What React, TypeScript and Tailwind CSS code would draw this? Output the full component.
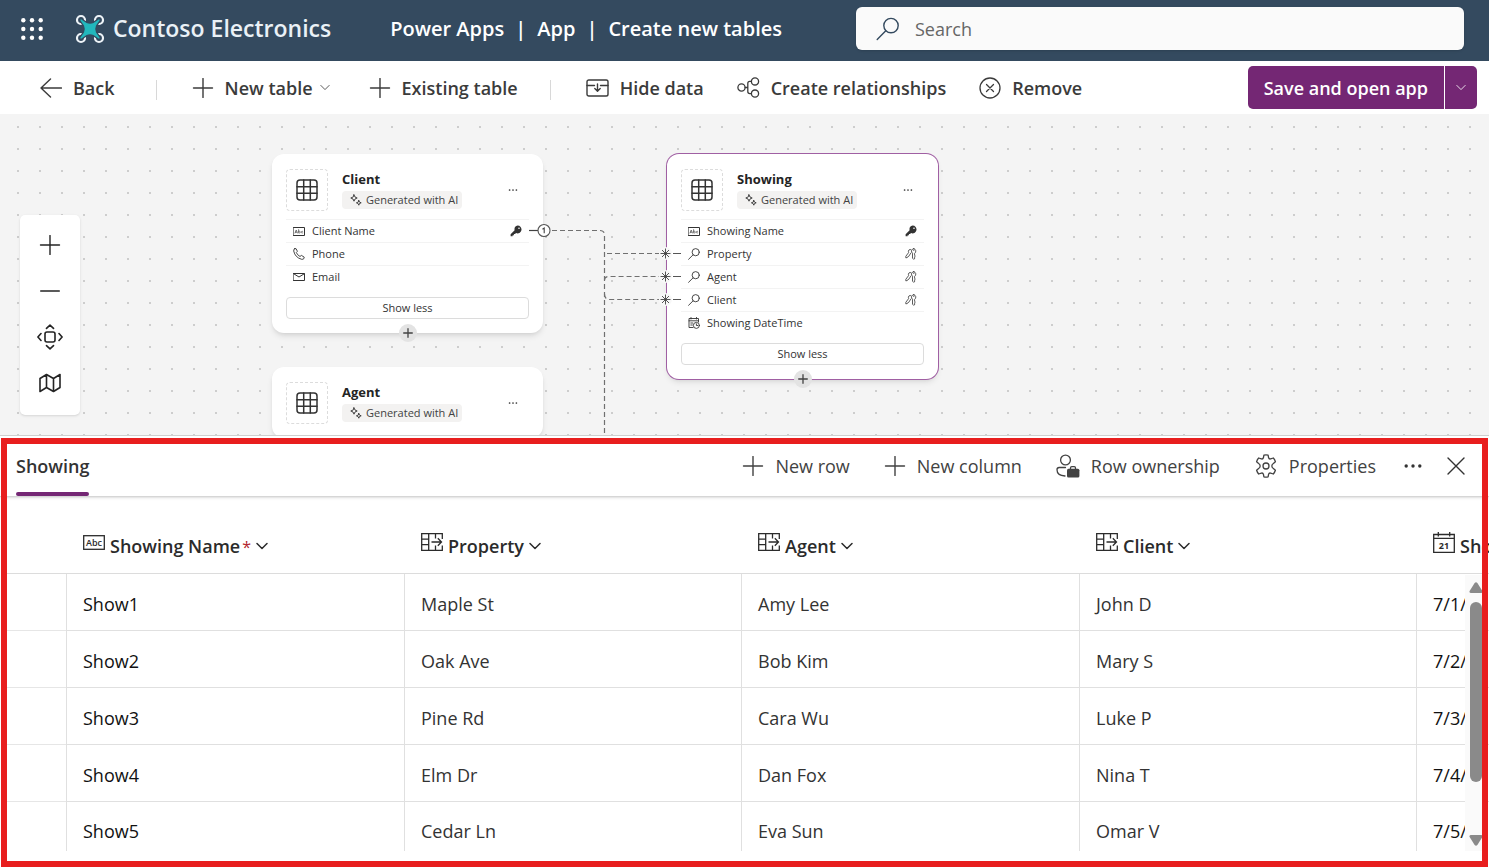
import type { ReactNode } from "react";

type SvgProps = { className?: string };

const stroke = {
  fill: "none",
  stroke: "currentColor",
  strokeLinecap: "round" as const,
  strokeLinejoin: "round" as const,
};

const WaffleIcon = () => (
  <svg width="22" height="22" viewBox="0 0 22 22" fill="#fff" aria-hidden="true">
    {[2.3, 11, 19.7].map((y) => [2.3, 11, 19.7].map((x) => <circle key={`${x}-${y}`} cx={x} cy={y} r="2.2" />))}
  </svg>
);

const DroneLogo = () => (
  <svg width="30" height="30" viewBox="0 0 30 30" aria-hidden="true">
    <g fill="none" stroke="#eef4f8" strokeWidth="2.200">
      {[6, 24].map((y) => [6, 24].map((x) => <circle key={`${x}-${y}`} cx={x} cy={y} r="4" />))}
    </g>
    <path
      d="M6 5.200 11.500 9Q15 10.600 18.500 9L24 5.200 24.800 6 21 11.500Q19.400 15 21 18.500L24.800 24 24 24.800 18.500 21Q15 19.400 11.500 21L6 24.800 5.200 24 9 18.500Q10.600 15 9 11.500L5.200 6Z"
      fill="#22b8bd"
      stroke="#344a5f"
      strokeWidth="2.600"
      paintOrder="stroke"
    />
  </svg>
);

const SearchIcon = ({ className }: SvgProps) => (
  <svg className={className} viewBox="0 0 24 24" {...stroke} strokeWidth="1.4" aria-hidden="true">
    <circle cx="15" cy="8.600" r="7.200" />
    <path d="M9.800 13.800 1.200 22.600" />
  </svg>
);

const LookupSmall = () => (
  <svg width="12" height="12" viewBox="0 0 12 12" {...stroke} strokeWidth=".9" aria-hidden="true">
    <circle cx="7.700" cy="4.200" r="3.600" />
    <path d="M5.100 6.800.6 11.300" />
  </svg>
);

const BackIcon = () => (
  <svg width="22" height="20" viewBox="0 0 22 20" {...stroke} strokeWidth="1.4" aria-hidden="true">
    <path d="M10.500 1 1 10l9.500 9M1 10h20.400" />
  </svg>
);

const PlusIcon = () => (
  <svg width="22" height="20" viewBox="0 0 22 20" {...stroke} strokeWidth="1.400" aria-hidden="true">
    <path d="M11 .5v19M1.500 10h19" />
  </svg>
);

const ChevronDown = ({ className }: SvgProps) => (
  <svg className={className} viewBox="0 0 12 8" {...stroke} aria-hidden="true">
    <path d="M1 1.500 6 6.500l5-5" />
  </svg>
);

const HideDataIcon = () => (
  <svg width="23" height="18" viewBox="0 0 23 18" {...stroke} strokeWidth="1.400" aria-hidden="true">
    <rect x="1" y="1" width="21" height="16" rx="1.800" />
    <path d="M1 6.500h7.500M14.500 6.500H22M11.500 5v7M8.800 9.600l2.700 2.600 2.700-2.600" />
  </svg>
);

const RelationIcon = () => (
  <svg width="23" height="21" viewBox="0 0 23 21" {...stroke} strokeWidth="1.300" aria-hidden="true">
    <circle cx="4.500" cy="10.500" r="3.600" />
    <circle cx="18" cy="4.400" r="3.600" />
    <circle cx="18" cy="16.600" r="3.600" />
    <path d="M8.200 10.500h2.600M14.400 4.400h-1.600q-2 0-2 2v8.200q0 2 2 2h1.600" />
  </svg>
);

const RemoveIcon = () => (
  <svg width="22" height="22" viewBox="0 0 22 22" {...stroke} strokeWidth="1.300" aria-hidden="true">
    <circle cx="11" cy="11" r="10" />
    <path d="m7.500 7.500 7 7M14.500 7.500l-7 7" />
  </svg>
);

const PersonBagIcon = () => (
  <svg width="24" height="24" viewBox="0 0 24 24" aria-hidden="true">
    <g {...stroke} strokeWidth="1.300">
      <circle cx="9.500" cy="6" r="4.900" />
      <path d="M9.500 13.500H3.200q-2.200 0-2.200 2.200Q1 21.500 9 22" />
      <path d="M14.500 15v-1q0-1.300 1.300-1.300h2.400q1.300 0 1.300 1.300v1" />
    </g>
    <rect x="11" y="14.700" width="12.400" height="8.800" rx="1.500" fill="currentColor" />
  </svg>
);

const GearIcon = () => (
  <svg width="24" height="24" viewBox="0 0 24 24" {...stroke} strokeWidth="1.300" aria-hidden="true">
    <circle cx="12" cy="12" r="3" />
    <path d="M9.900 1.200q2.100-.5 4.200 0l.5 2.600q.5 1.500 2 1.100l2.700-.9q1.500 1.600 2.100 3.700l-2 1.800q-1.700 1-1.500 2.500-.2 1.500 1.500 2.500l2 1.800q-.6 2.100-2.100 3.700l-2.700-.9q-1.500-.4-2 1.100l-.5 2.600q-2.100.5-4.200 0l-.5-2.600q-.5-1.500-2-1.100l-2.700.9q-1.500-1.600-2.100-3.700l2-1.800q1.700-1 1.500-2.500.2-1.500-1.500-2.500l-2-1.800q.6-2.100 2.100-3.700l2.700.9q1.500.4 2-1.100z" />
  </svg>
);

const MoreIcon = ({ className }: SvgProps) => (
  <svg className={className} viewBox="0 0 18 4" fill="currentColor" aria-hidden="true">
    <circle cx="2.200" cy="2" r="1.700" />
    <circle cx="9" cy="2" r="1.700" />
    <circle cx="15.800" cy="2" r="1.700" />
  </svg>
);

const CloseIcon = () => (
  <svg width="18" height="18" viewBox="0 0 18 18" {...stroke} strokeWidth="1.400" aria-hidden="true">
    <path d="m1 1 16 16M17 1 1 17" />
  </svg>
);

const FitIcon = () => (
  <svg width="26" height="26" viewBox="0 0 26 26" {...stroke} strokeWidth="1.600" aria-hidden="true">
    <rect x="8" y="8" width="10" height="10" rx="2" />
    <path d="M9.500 4.400 13 1.200l3.500 3.200M9.500 21.600l3.500 3.200 3.500-3.200M4 9.500.9 13 4 16.500M22 9.500l3.100 3.500-3.100 3.500" />
  </svg>
);

const MapIcon = () => (
  <svg width="22" height="20" viewBox="0 0 22 20" {...stroke} strokeWidth="1.600" aria-hidden="true">
    <path d="M1 5.500 7.500 1.500l7 4 6.500-4v13l-6.500 4-7-4-6.500 4zM7.500 1.500v13M14.500 5.500v13" />
  </svg>
);

const GridIcon = () => (
  <svg width="22" height="22" viewBox="0 0 22 22" {...stroke} strokeWidth="1.500" aria-hidden="true">
    <rect x="1" y="1" width="20" height="20" rx="3" />
    <path d="M7.700 1v20M14.300 1v20M1 7.700h20M1 14.300h20" />
  </svg>
);

const SparkleIcon = () => (
  <svg width="12" height="12" viewBox="0 0 12 12" {...stroke} strokeWidth="1" aria-hidden="true">
    <path d="M4 .8 5 3l2.200 1L5 5 4 7.200 3 5 .8 4 3 3zM8.800 6.400l.7 1.700 1.700.7-1.700.7-.7 1.700-.7-1.700-1.700-.7 1.700-.7z" />
  </svg>
);

const AbcSmall = () => (
  <svg width="12" height="9" viewBox="0 0 12 9" aria-hidden="true">
    <rect x=".5" y=".5" width="11" height="8" {...stroke} strokeWidth="1" />
    <path d="M2 6 3.200 3 4.400 6M2.400 5.200h1.600M5.600 2.600V6h.8a.9.900 0 0 0 0-1.800h-.8M9.800 4.500a.9.900 0 1 0 0 1.300" {...stroke} strokeWidth=".6" />
  </svg>
);

const PhoneIcon = () => (
  <svg width="12" height="12" viewBox="0 0 12 12" {...stroke} strokeWidth=".9" aria-hidden="true">
    <path d="M1.500.8 3 .6l1.400 2.700L3.300 4.500q1 2.500 3.700 4l1.400-1.100 2.800 1.700-.3 1.500q-.8.900-2.300.7Q2 9.400.7 3 .7 1.400 1.500.8z" />
  </svg>
);

const MailIcon = () => (
  <svg width="12" height="8" viewBox="0 0 12 8" {...stroke} strokeWidth="1" aria-hidden="true">
    <path d="M.5.5h11v7H.5zM.8.8 6 4 11.200.8" />
  </svg>
);

const DateTimeIcon = () => (
  <svg width="12" height="12" viewBox="0 0 12 12" {...stroke} strokeWidth=".9" aria-hidden="true">
    <path d="M5 10.500H1v-9h9.500V5M1 3.800h9.500M3 .5v1.500M8.500.5v1.500M2.800 6h2M2.800 8h1.500" />
    <circle cx="8.400" cy="8.400" r="3" />
    <path d="M8.400 6.800v1.700h1.300" />
  </svg>
);

const KeyIcon = () => (
  <svg width="12" height="12" viewBox="0 0 12 12" fill="currentColor" aria-hidden="true">
    <path
      fillRule="evenodd"
      d="M7.600.6a3.900 3.900 0 1 1-1.500 7.500L5 9.100H3.900v1.200H2.600v1H.6V9.200l4-4A3.900 3.900 0 0 1 7.600.6zM9 2.400a.8.800 0 1 0 0 1.600.8.800 0 0 0 0-1.600z"
    />
  </svg>
);

const KeysIcon = () => (
  <svg width="12" height="12" viewBox="0 0 12 12" {...stroke} strokeWidth=".8" aria-hidden="true">
    <path d="M6.200 1.800Q5 .8 3.900 2 3 3.200 3.600 4.600L.8 8.300v1.500l1.500-.2.500-1 .9-.2 2.200-3.400" />
    <path d="M8.800.7A2.500 2.500 0 0 0 7.500 5.200v4.900l1.200 1.300 1.300-1.300-.6-1 .8-1-.6-1V5.300A2.500 2.500 0 0 0 8.800.7z" />
    <path d="M8.800 2.400v.2" />
  </svg>
);

const AbcLarge = () => (
  <svg width="22" height="15" viewBox="0 0 22 15" aria-hidden="true">
    <rect x=".7" y=".7" width="20.600" height="13.600" fill="none" stroke="currentColor" strokeWidth="1.300" />
    <text x="11" y="11" textAnchor="middle" fontSize="9" fill="currentColor">
      Abc
    </text>
  </svg>
);

const LookupIcon = () => (
  <svg width="22" height="18" viewBox="0 0 22 18" fill="none" stroke="currentColor" strokeWidth="1.300" aria-hidden="true">
    <path d="M21.300 6V.7H.7v16.600h20.600V12.500M7.700.7v16.600M.7 6.200h7M.7 11.700h7M14.500.7v4.800M14.500 12.500v4.800M10.500 9h10M16.800 5.300 20.500 9l-3.700 3.700" />
  </svg>
);

const CalendarIcon = () => (
  <svg width="22" height="21" viewBox="0 0 22 21" aria-hidden="true">
    <path d="M.7 2.500h20.600v17.800H.7zM.7 6.300h20.600M5.300 0v4.500M16.700 0v4.500" fill="none" stroke="currentColor" strokeWidth="1.300" />
    <text x="11" y="16.500" textAnchor="middle" fontSize="9" fontWeight="700" fill="currentColor">
      21
    </text>
  </svg>
);

type Field = { icon: ReactNode; name: string; key?: ReactNode };

const clientFields: Field[] = [
  { icon: <AbcSmall />, name: "Client Name", key: <KeyIcon /> },
  { icon: <PhoneIcon />, name: "Phone" },
  { icon: <MailIcon />, name: "Email" },
];

const showingFields: Field[] = [
  { icon: <AbcSmall />, name: "Showing Name", key: <KeyIcon /> },
  { icon: <LookupSmall />, name: "Property", key: <KeysIcon /> },
  { icon: <LookupSmall />, name: "Agent", key: <KeysIcon /> },
  { icon: <LookupSmall />, name: "Client", key: <KeysIcon /> },
  { icon: <DateTimeIcon />, name: "Showing DateTime" },
];

function TableCard({ title, fields, className }: { title: string; fields: Field[]; className: string }) {
  return (
    <article className={`absolute w-[271px] rounded-xl bg-white px-[14px] pt-[15px] pb-[14px] shadow-md ${className}`}>
      <header className="flex h-[42px] items-center">
        <div className="grid size-[42px] place-items-center rounded-sm border border-dashed border-[#dcdcdc] text-[#333]">
          <GridIcon />
        </div>
        <div className="ml-[14px] flex-1">
          <h2 className="text-[13px] leading-4 font-bold text-[#242424]">{title}</h2>
          <span className="mt-1 flex h-[18px] w-fit items-center gap-1 rounded-sm bg-[#f3f2f1] pr-1 pl-2 text-[11px] text-[#424242]">
            <SparkleIcon />
            Generated with AI
          </span>
        </div>
        <button type="button" aria-label={`More options for ${title}`} className="mr-[11px] text-[#333]">
          <MoreIcon className="h-[2px] w-[10px]" />
        </button>
      </header>
      {fields.length > 0 && (
        <>
          <ul className="mt-2">
            {fields.map((f) => (
              <li key={f.name} className="flex h-[23px] items-center border-t border-[#f3f3f3] px-[7px] text-[11px] text-[#333]">
                <span className="grid w-3 place-items-center">{f.icon}</span>
                <span className="ml-[7px] flex-1">{f.name}</span>
                {f.key}
              </li>
            ))}
          </ul>
          <button type="button" className="mt-[9px] h-[22px] w-full rounded-sm border border-[#dcdcdc] text-[11px] leading-5 text-[#333]">
            Show less
          </button>
          <button
            type="button"
            aria-label={`Add column to ${title}`}
            className="absolute -bottom-[9px] left-1/2 grid size-[18px] -translate-x-1/2 place-items-center rounded-full bg-[#e3e3e3] text-[#424242]"
          >
            <svg width="10" height="10" viewBox="0 0 10 10" {...stroke} strokeWidth="1.300" aria-hidden="true">
              <path d="M5 .7v8.600M.7 5h8.600" />
            </svg>
          </button>
        </>
      )}
    </article>
  );
}

function Connectors() {
  return (
    <svg className="pointer-events-none absolute inset-0 size-full" aria-hidden="true">
      <g fill="none" stroke="#707070" strokeWidth="1.200" strokeDasharray="5 3">
        <path d="M552 116.500H600q4.500 0 4.500 4.500V321" />
        <path d="M607 139.500h52" />
        <path d="M604.500 166q0-3.500 4-3.500h51" />
        <path d="M604.500 180q0 5.500 5 5.500h50" />
      </g>
      <g stroke="#424242" strokeWidth="1.200" fill="none">
        <path d="M529 116.500h9" />
        <circle cx="544" cy="116.500" r="6" fill="#fff" stroke="#555" strokeWidth="1.100" />
        <path d="M542.500 115.300l1.700-1.300v5.200" strokeWidth="1.100" />
      </g>
      {[139.5, 162.5, 185.5].map((y) => (
        <g key={y} stroke="#424242" strokeWidth=".9">
          <circle cx="665.500" cy={y} r="6.500" fill="#f8f8f8" stroke="none" />
          <path d={`M660.5 ${y}h10M665.5 ${y - 5}v10M662 ${y - 3.5}l7 7M669 ${y - 3.5}l-7 7M673 ${y}h8`} />
        </g>
      ))}
    </svg>
  );
}

function ToolButton({ icon, children }: { icon: ReactNode; children: ReactNode }) {
  return (
    <button type="button" className="flex items-center gap-[11px] whitespace-nowrap">
      {icon}
      {children}
    </button>
  );
}

const rows = [
  ["Show1", "Maple St", "Amy Lee", "John D", "7/1/"],
  ["Show2", "Oak Ave", "Bob Kim", "Mary S", "7/2/"],
  ["Show3", "Pine Rd", "Cara Wu", "Luke P", "7/3/"],
  ["Show4", "Elm Dr", "Dan Fox", "Nina T", "7/4/"],
  ["Show5", "Cedar Ln", "Eva Sun", "Omar V", "7/5/"],
];

const headings: { label: string; icon: ReactNode; required?: boolean; menu: boolean }[] = [
  { label: "Showing Name", icon: <AbcLarge />, required: true, menu: true },
  { label: "Property", icon: <LookupIcon />, menu: true },
  { label: "Agent", icon: <LookupIcon />, menu: true },
  { label: "Client", icon: <LookupIcon />, menu: true },
  { label: "Sho", icon: <CalendarIcon />, menu: false },
];

export default function App() {
  return (
    <div className="flex h-screen flex-col overflow-hidden bg-white font-['Open_Sans','Noto_Sans',sans-serif] text-[#333]">
      <header className="flex h-[61px] shrink-0 items-center bg-[#344a5f] pr-[25px] pb-1 pl-[21px] text-white">
        <button type="button" aria-label="App launcher">
          <WaffleIcon />
        </button>
        <a href="#" className="ml-8 flex items-center gap-2 text-[23px] font-semibold whitespace-nowrap text-[#eaf1f6]">
          <DroneLogo />
          Contoso Electronics
        </a>
        <nav className="ml-[59px] flex items-center gap-[11px] text-xl font-semibold whitespace-nowrap">
          <a href="#">Power Apps</a>
          <span>|</span>
          <a href="#">App</a>
          <span>|</span>
          <span>Create new tables</span>
        </nav>
        <label className="ml-auto flex h-[43px] w-[608px] items-center gap-[15px] rounded-md bg-[#fafafa] px-5 text-[#344a5f] shadow-sm">
          <SearchIcon className="size-6" />
          <input type="search" aria-label="Search" placeholder="Search" className="flex-1 bg-transparent text-lg outline-none placeholder:text-[#666]" />
        </label>
      </header>

      <div className="flex h-[53px] shrink-0 items-center pr-3 pl-10 text-lg font-semibold text-[#3b3b3b]">
        <ToolButton icon={<BackIcon />}>Back</ToolButton>
        <div className="mt-1 ml-[41px] h-5 w-px bg-[#d8d8d8]" />
        <div className="ml-[35px] flex items-center gap-[39px]">
          <ToolButton icon={<PlusIcon />}>
            New table
            <ChevronDown className="-ml-1 h-[7px] w-[10px]" />
          </ToolButton>
          <ToolButton icon={<PlusIcon />}>Existing table</ToolButton>
        </div>
        <div className="mt-1 ml-8 h-5 w-px bg-[#d8d8d8]" />
        <div className="ml-[35px] flex items-center gap-[33px]">
          <ToolButton icon={<HideDataIcon />}>Hide data</ToolButton>
          <ToolButton icon={<RelationIcon />}>Create relationships</ToolButton>
          <ToolButton icon={<RemoveIcon />}>Remove</ToolButton>
        </div>
        <div className="ml-auto flex h-[43px] overflow-hidden rounded-[5px] text-white">
          <button type="button" className="bg-[#742774] px-4 whitespace-nowrap">
            Save and open app
          </button>
          <button type="button" aria-label="More save options" className="ml-px grid w-8 place-items-center bg-[#742774]">
            <ChevronDown className="h-[7px] w-[10px]" />
          </button>
        </div>
      </div>

      <main className="relative h-[321px] shrink-0 overflow-hidden bg-[#f4f4f4]">
        <svg className="absolute inset-0 size-full" aria-hidden="true">
          <defs>
            <pattern id="dots" width="22" height="22" patternUnits="userSpaceOnUse">
              <rect x="17" y="12" width="2" height="2" fill="#cdcdcd" />
            </pattern>
          </defs>
          <rect width="100%" height="100%" fill="url(#dots)" />
        </svg>
        <TableCard title="Client" fields={clientFields} className="top-[40px] left-[272px]" />
        <TableCard title="Agent" fields={[]} className="top-[253px] left-[272px]" />
        <TableCard title="Showing" fields={showingFields} className="top-[40px] left-[667px] ring-1 ring-[#a05fa3]" />
        <Connectors />
        <div className="absolute top-[101px] left-5 flex h-[200px] w-[60px] flex-col rounded-[5px] bg-white pt-[7px] text-[#242424] shadow-sm">
          <button type="button" aria-label="Zoom in" className="grid h-[46px] place-items-center">
            <PlusIcon />
          </button>
          <button type="button" aria-label="Zoom out" className="grid h-[46px] place-items-center">
            <svg width="20" height="2" viewBox="0 0 20 2" {...stroke} strokeWidth="1.500" aria-hidden="true">
              <path d="M.7 1h18.600" />
            </svg>
          </button>
          <button type="button" aria-label="Fit to screen" className="grid h-[46px] place-items-center">
            <FitIcon />
          </button>
          <button type="button" aria-label="Toggle mini map" className="grid h-[46px] place-items-center">
            <MapIcon />
          </button>
        </div>
      </main>

      <section className="relative flex-1 overflow-hidden border-t border-[#cfcfcf]">
        <div className="relative z-10 flex h-[61px] items-center border-b border-[#d6d6d6] bg-white pr-6 pl-4 text-lg shadow-sm">
          <div role="tablist" className="h-full">
            <button
              type="button"
              role="tab"
              aria-selected="true"
              className="relative h-full font-semibold after:absolute after:inset-x-0 after:bottom-0 after:h-1 after:rounded-full after:bg-[#742774]"
            >
              Showing
            </button>
          </div>
          <div className="ml-auto flex items-center gap-[34px] text-[#424242]">
            <ToolButton icon={<PlusIcon />}>New row</ToolButton>
            <ToolButton icon={<PlusIcon />}>New column</ToolButton>
            <ToolButton icon={<PersonBagIcon />}>Row ownership</ToolButton>
            <ToolButton icon={<GearIcon />}>Properties</ToolButton>
          </div>
          <button type="button" aria-label="More commands" className="ml-7 text-[#333]">
            <MoreIcon className="h-1 w-[18px]" />
          </button>
          <button type="button" aria-label="Close" className="ml-[25px]">
            <CloseIcon />
          </button>
        </div>

        <div className="relative ml-[7px]">
          <table className="w-[1747px] table-fixed border-separate border-spacing-0 text-left text-lg">
            <colgroup>
              <col className="w-[59px]" />
              <col className="w-[338px]" />
              <col className="w-[337px]" />
              <col className="w-[338px]" />
              <col className="w-[337px]" />
              <col />
            </colgroup>
            <thead>
              <tr className="h-[77px]">
                <th className="border-b border-[#dcdcdc]" aria-label="Row selector" />
                {headings.map((h) => (
                  <th key={h.label} className="border-b border-[#dcdcdc] pt-[22px] pl-[17px] font-semibold text-[#2b2b2b]">
                    <div className="flex items-center gap-[5px]">
                      <span className="mb-2">{h.icon}</span>
                      <span>
                        {h.label}
                        {h.required && <span className="ml-0.5 text-base font-normal text-[#b3262e]">*</span>}
                      </span>
                      {h.menu && <ChevronDown className="h-2 w-3 stroke-[1.5]" />}
                    </div>
                  </th>
                ))}
              </tr>
            </thead>
            <tbody>
              {rows.map((row, i) => (
                <tr key={row[0]} className={i === rows.length - 1 ? "h-[49px]" : "h-[57px]"}>
                  <td className={i === rows.length - 1 ? "" : "border-b border-[#e6e6e6]"} />
                  {row.map((cell, j) => (
                    <td
                      key={cell}
                      className={`border-l border-[#e0e0e0] pl-4 ${i === rows.length - 1 ? "pt-2" : "border-b pt-1"} ${
                        j === 0 || j === 4 ? "text-[#111]" : "text-[#333]"
                      }`}
                    >
                      {cell}
                    </td>
                  ))}
                </tr>
              ))}
            </tbody>
          </table>
          <div className="absolute top-[78px] right-[7px] bottom-0 flex w-[17px] flex-col items-center bg-[#fafafa] pt-[7px] pb-[5px] pl-[5px]">
            <svg width="14" height="11" viewBox="0 0 14 11" fill="#8a8a8a" aria-hidden="true">
              <path d="M5.600 1q1.400-1.600 2.800 0l5 8q.6 2-1.400 2H2Q0 11 .6 9z" />
            </svg>
            <div className="mt-[9px] h-[180px] w-3 rounded-full bg-[#8a8a8a]" />
            <svg width="14" height="11" viewBox="0 0 14 11" fill="#8a8a8a" className="mt-auto" aria-hidden="true">
              <path d="M5.600 10q1.400 1.600 2.800 0l5-8q.6-2-1.400-2H2Q0 0 .6 2z" />
            </svg>
          </div>
        </div>
        <div className="pointer-events-none absolute top-[2px] right-px bottom-px left-px z-20 border-[6px] border-[#e81e1e]" />
      </section>
    </div>
  );
}
